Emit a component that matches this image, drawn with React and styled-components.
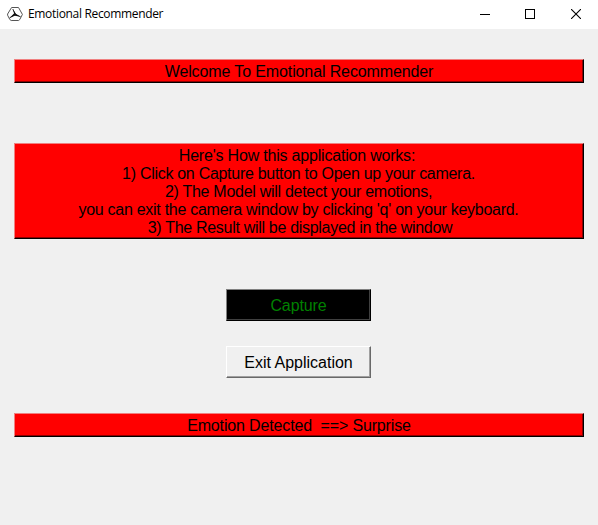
import React from "react";
import styled, { createGlobalStyle } from "styled-components";

const GlobalStyle = createGlobalStyle`
  *, *::before, *::after { box-sizing: border-box; }
  body { margin: 0; background: #f0f0f0; overflow: hidden; }
`;

const Window = styled.div`
  width: 598px;
  height: 525px;
  display: flex;
  flex-direction: column;
  background: #f0f0f0;
  font-family: "Liberation Sans", Arial, sans-serif;
  font-size: 16px;
  line-height: 18px;
  color: #000;
`;

const TitleBar = styled.header`
  flex: none;
  height: 29px;
  display: flex;
  align-items: center;
  padding-left: 7px;
  padding-bottom: 2px;
  background: #fff;
`;

const Title = styled.h1`
  flex: 1;
  margin: 0 0 0 5px;
  font-family: "Open Sans", "Noto Sans", sans-serif;
  font-size: 12px;
  font-weight: 400;
  line-height: 16px;
  letter-spacing: -0.33px;
  white-space: nowrap;
`;

const Controls = styled.div`
  display: flex;
  margin-right: -1px;
`;

const ControlButton = styled.button`
  width: ${(p) => p.$width || 46}px;
  height: 27px;
  padding: 0;
  border: 0;
  background: transparent;
  display: flex;
  align-items: center;
  justify-content: center;
`;

const Content = styled.main`
  display: flex;
  flex-direction: column;
  align-items: center;
  padding: 30px 14px 0;
`;

const Banner = styled.section`
  width: 570px;
  height: ${(p) => p.$height}px;
  margin-bottom: ${(p) => p.$gap}px;
  padding-top: 3px;
  background: #f00;
  border: 1px solid;
  border-color: #f08080 #000 #000 #f08080;
  box-shadow: inset -1px -1px 0 #900000;
`;

const Line = styled.p`
  margin: 0;
  padding-left: ${(p) => p.$before || 0}px;
  padding-right: ${(p) => p.$after || 0}px;
  text-align: center;
  white-space: pre;
  letter-spacing: ${(p) => p.$spacing || 0}px;
`;

const PushButton = styled.button`
  width: 145px;
  height: 32px;
  margin-right: 1px;
  margin-bottom: ${(p) => p.$gap}px;
  padding: 1px 0 0;
  font: inherit;
  letter-spacing: ${(p) => (p.$dark ? "-0.1px" : "0")};
  color: ${(p) => (p.$dark ? "#008000" : "#000")};
  background: ${(p) => (p.$dark ? "#000" : "#f0f0f0")};
  border: 1px solid;
  border-color: ${(p) => (p.$dark ? "#808080 #000 #000 #808080" : "#fff #696969 #696969 #fff")};
  box-shadow: inset -1px -1px 0 ${(p) => (p.$dark ? "#404040" : "#a0a0a0")};
`;

const AppIcon = () => (
  <svg width="16" height="16" viewBox="0 0 16 16" fill="none">
    <path d="M4.6 1.5h6.9L15.4 8.4l-2.6 5.1-1.2 1H4.2l-1.4-1L.6 9.2V8z" stroke="#555" strokeWidth="1" strokeLinejoin="round" />
    <path d="M5.8 3 7.2 7.3 2.6 11.9 7.8 9.7l5.8 1.1L9.1 7.9z" fill="#111" />
    <path d="M5.8 3 8.1 8.3M2.6 11.9l5.5-3.6M13.6 10.8 8.1 8.3" stroke="#111" strokeWidth=".8" />
  </svg>
);

const instructions = [
  { text: "Here's How this application works:", spacing: -0.2, after: 4 },
  { text: "1) Click on Capture button to Open up your camera.", spacing: -0.29, after: 1 },
  { text: "2) The Model will detect your emotions,", spacing: -0.28, after: 1 },
  { text: "you can exit the camera window by clicking 'q' on your keyboard.", spacing: -0.28, after: 1 },
  { text: "3) The Result will be displayed in the window", spacing: -0.3, before: 2 },
];

export default function App() {
  return (
    <>
      <GlobalStyle />
      <Window>
        <TitleBar>
          <AppIcon />
          <Title>Emotional Recommender</Title>
          <Controls>
            <ControlButton $width={44} aria-label="Minimize">
              <svg width="10" height="10" shapeRendering="crispEdges"><path d="M0 5h10v1H0z" /></svg>
            </ControlButton>
            <ControlButton aria-label="Maximize">
              <svg width="10" height="10" fill="none" stroke="#000" shapeRendering="crispEdges"><path d="M.5.5h9v9h-9z" /></svg>
            </ControlButton>
            <ControlButton aria-label="Close">
              <svg width="10" height="10" stroke="#000" strokeWidth="1.1"><path d="M0 0l10 10M10 0L0 10" /></svg>
            </ControlButton>
          </Controls>
        </TitleBar>
        <Content>
          <Banner $height={24} $gap={60}>
            <Line $spacing={-0.12}>Welcome To Emotional Recommender</Line>
          </Banner>
          <Banner $height={96} $gap={50}>
            {instructions.map(({ text, spacing, before, after }) => (
              <Line key={text} $spacing={spacing} $before={before} $after={after}>{text}</Line>
            ))}
          </Banner>
          <PushButton $dark $gap={25}>Capture</PushButton>
          <PushButton $gap={35}>Exit Application</PushButton>
          <Banner $height={24} $gap={0}>
            <Line $spacing={-0.15}>{"Emotion Detected  ==> Surprise"}</Line>
          </Banner>
        </Content>
      </Window>
    </>
  );
}
